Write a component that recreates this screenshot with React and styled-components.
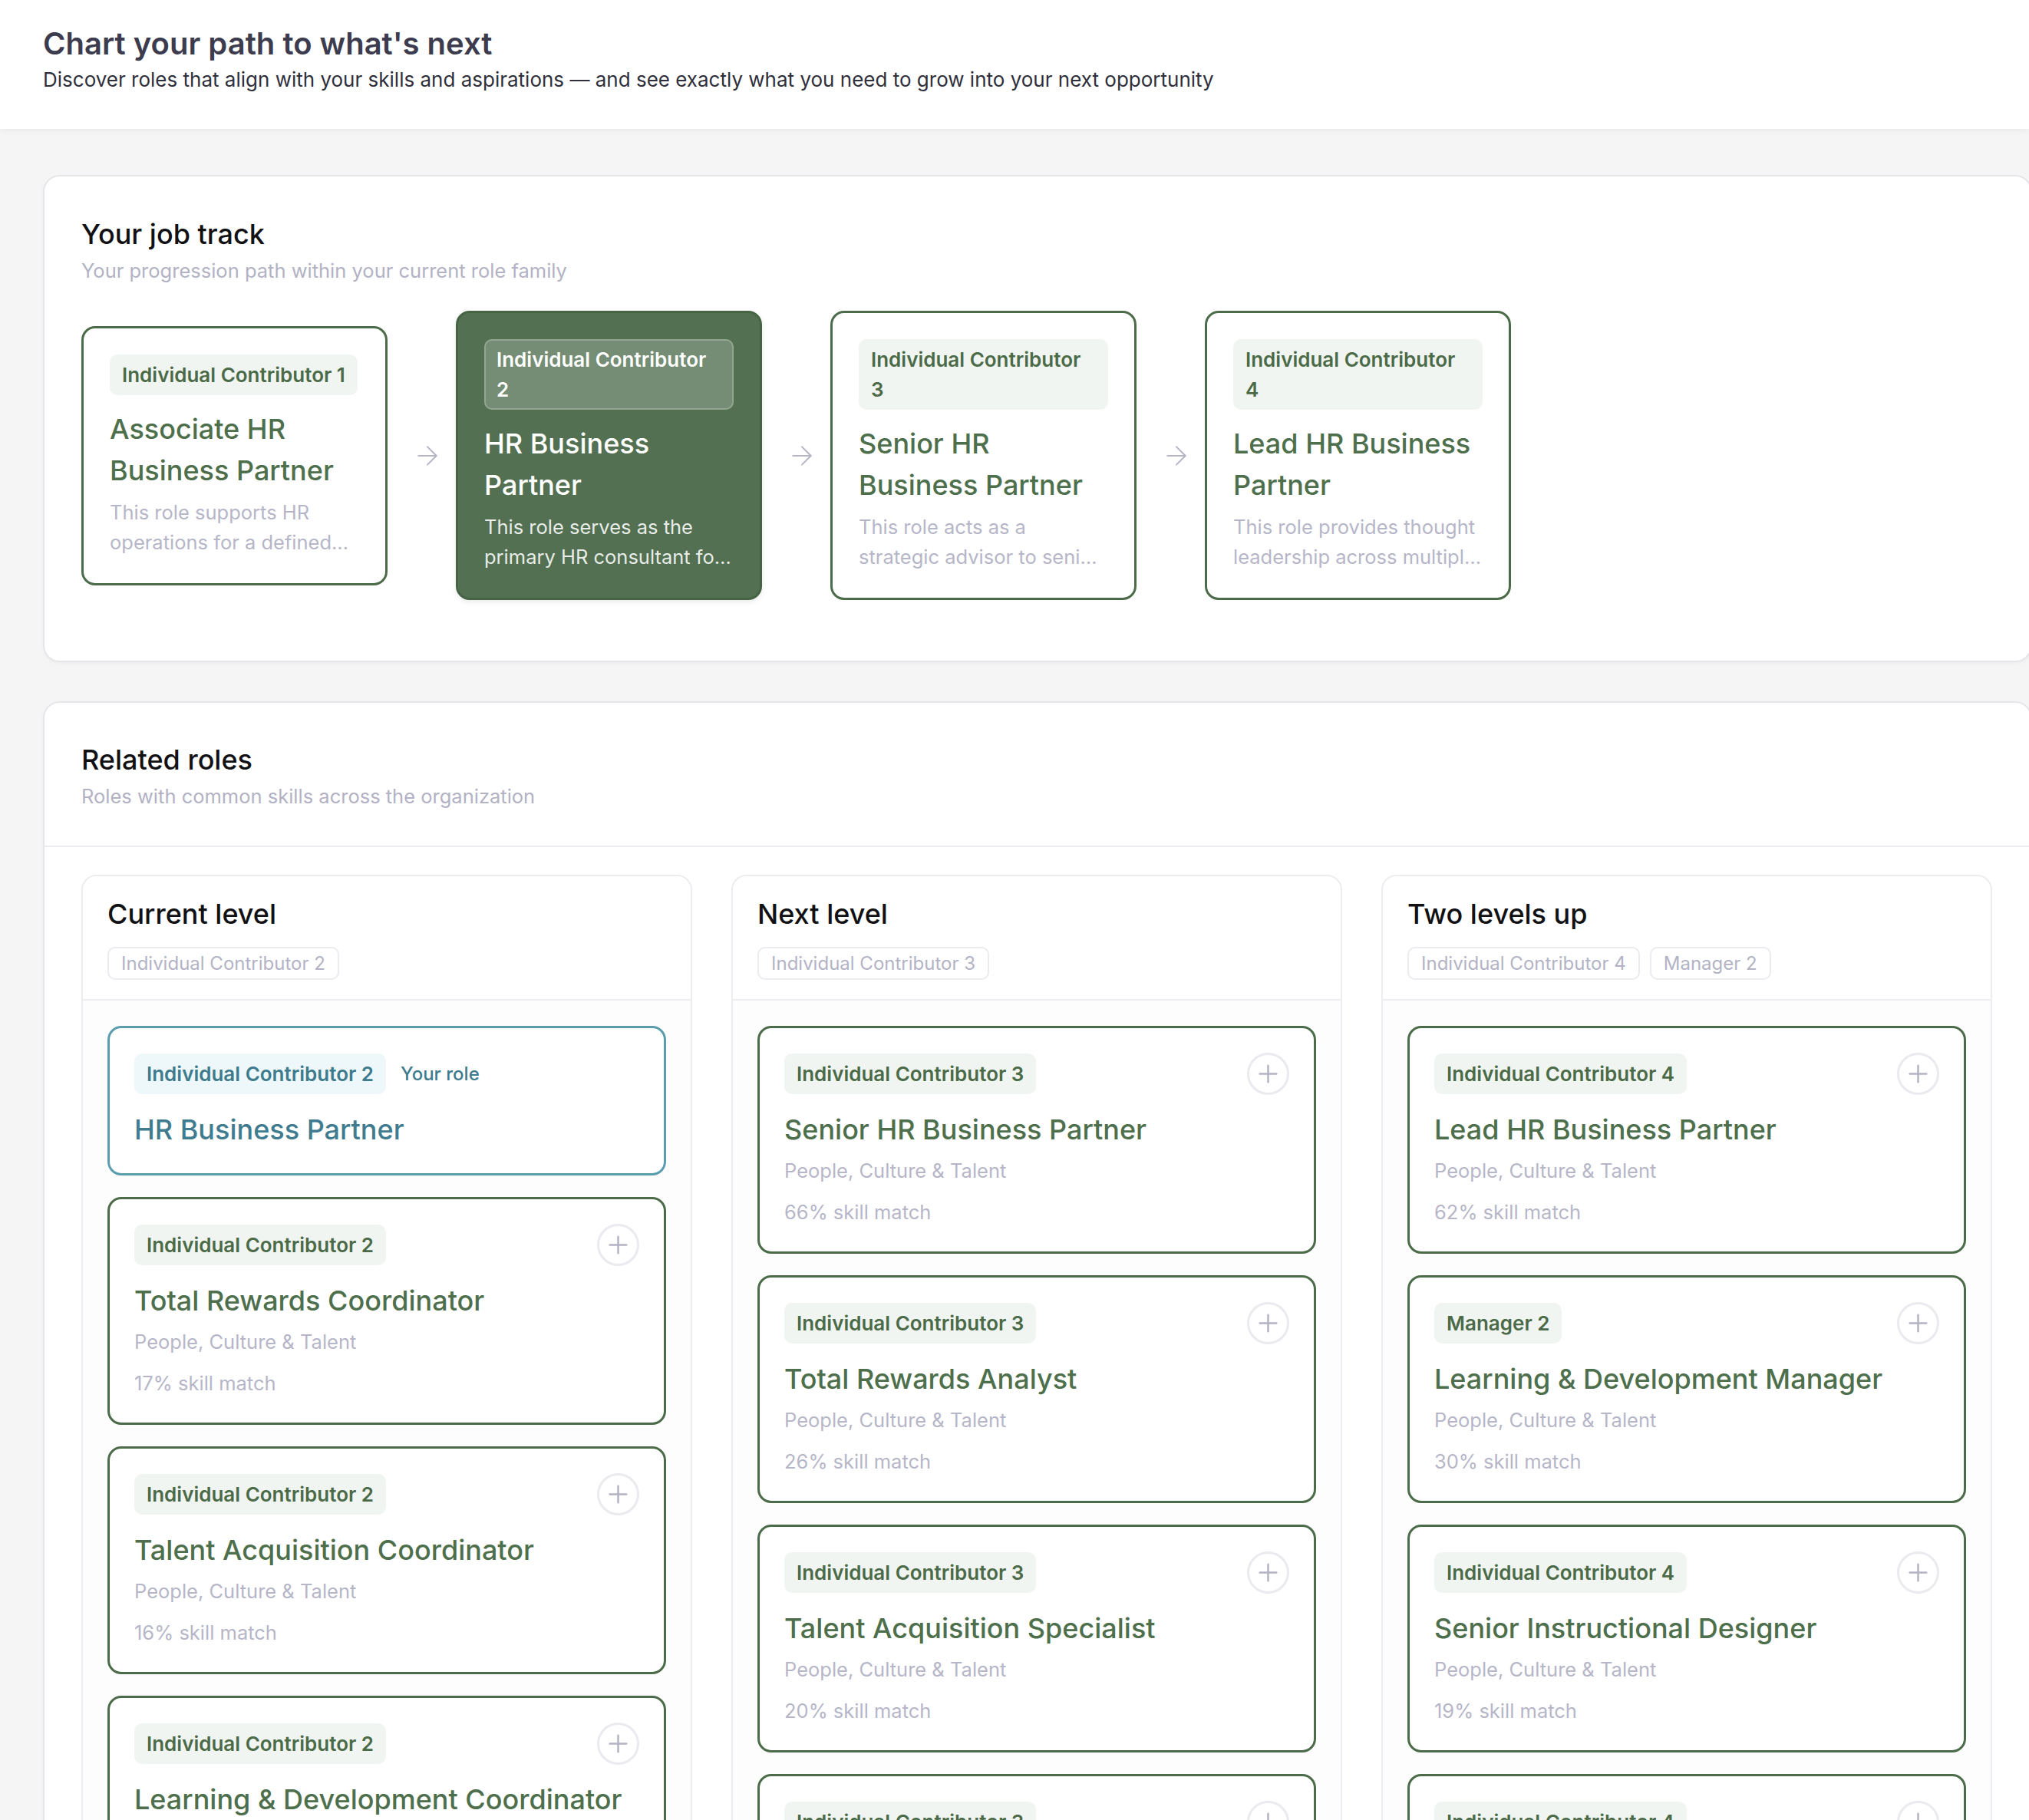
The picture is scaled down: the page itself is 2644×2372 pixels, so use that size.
import React from 'react';
import styled, { createGlobalStyle } from 'styled-components';
import { ArrowRight, Plus } from 'lucide-react';

const GlobalStyle = createGlobalStyle`
  * { box-sizing: border-box; }
  body {
    margin: 0;
    background: #f5f5f5;
    font-family: Inter, "Noto Sans", sans-serif;
    overflow: hidden;
  }
`;

const track = [
  {
    level: 'Individual Contributor 1',
    title: 'Associate HR Business Partner',
    desc: 'This role supports HR operations for a defined business unit, partnering with people managers on day-to-day needs.',
  },
  {
    level: 'Individual Contributor 2',
    title: 'HR Business Partner',
    desc: 'This role serves as the primary HR consultant for a business unit and its leadership team.',
    active: true,
  },
  {
    level: 'Individual Contributor 3',
    title: 'Senior HR Business Partner',
    desc: 'This role acts as a strategic advisor to senior leaders across the organization.',
  },
  {
    level: 'Individual Contributor 4',
    title: 'Lead HR Business Partner',
    desc: 'This role provides thought leadership across multiple business units and HR programs.',
  },
];

const columns = [
  {
    title: 'Current level',
    chips: ['Individual Contributor 2'],
    roles: [
      { level: 'Individual Contributor 2', title: 'HR Business Partner', current: true },
      { level: 'Individual Contributor 2', title: 'Total Rewards Coordinator', match: 17 },
      { level: 'Individual Contributor 2', title: 'Talent Acquisition Coordinator', match: 16 },
      { level: 'Individual Contributor 2', title: 'Learning & Development Coordinator', match: 14 },
    ],
  },
  {
    title: 'Next level',
    chips: ['Individual Contributor 3'],
    roles: [
      { level: 'Individual Contributor 3', title: 'Senior HR Business Partner', match: 66 },
      { level: 'Individual Contributor 3', title: 'Total Rewards Analyst', match: 26 },
      { level: 'Individual Contributor 3', title: 'Talent Acquisition Specialist', match: 20 },
      { level: 'Individual Contributor 3', title: 'Learning & Development Specialist', match: 18 },
    ],
  },
  {
    title: 'Two levels up',
    chips: ['Individual Contributor 4', 'Manager 2'],
    roles: [
      { level: 'Individual Contributor 4', title: 'Lead HR Business Partner', match: 62 },
      { level: 'Manager 2', title: 'Learning & Development Manager', match: 30 },
      { level: 'Individual Contributor 4', title: 'Senior Instructional Designer', match: 19 },
      { level: 'Individual Contributor 4', title: 'Principal Compensation Analyst', match: 15 },
    ],
  },
];

export default function App() {
  return (
    <Page>
      <GlobalStyle />
      <Header>
        <PageTitle>Chart your path to what's next</PageTitle>
        <PageSubtitle>
          Discover roles that align with your skills and aspirations — and see exactly what you need to grow into your next opportunity
        </PageSubtitle>
      </Header>

      <Main>
        <Panel>
          <TrackHead>
            <PanelTitle>Your job track</PanelTitle>
            <PanelSubtitle>Your progression path within your current role family</PanelSubtitle>
          </TrackHead>
          <TrackRow>
            {track.map((step, i) => (
              <React.Fragment key={step.title}>
                {i > 0 && (
                  <ArrowSlot>
                    <ArrowRight size={40} strokeWidth={1.2} />
                  </ArrowSlot>
                )}
                <TrackCard $active={step.active}>
                  <LevelBadge $tone={step.active ? 'active' : 'green'}>{step.level}</LevelBadge>
                  <TrackTitle $active={step.active}>{step.title}</TrackTitle>
                  <TrackDesc $active={step.active}>{step.desc}</TrackDesc>
                </TrackCard>
              </React.Fragment>
            ))}
          </TrackRow>
        </Panel>

        <Panel>
          <RelatedHead>
            <PanelTitle>Related roles</PanelTitle>
            <PanelSubtitle>Roles with common skills across the organization</PanelSubtitle>
          </RelatedHead>
          <ColumnGrid>
            {columns.map(col => (
              <Column key={col.title}>
                <ColumnHead>
                  <ColumnTitle>{col.title}</ColumnTitle>
                  <ChipRow>
                    {col.chips.map(c => <Chip key={c}>{c}</Chip>)}
                  </ChipRow>
                </ColumnHead>
                <ColumnBody>
                  {col.roles.map(role => (
                    <RoleCard key={role.title} $current={role.current}>
                      <CardTop>
                        <BadgeGroup>
                          <LevelBadge $tone={role.current ? 'teal' : 'green'}>{role.level}</LevelBadge>
                          {role.current && <YourRole>Your role</YourRole>}
                        </BadgeGroup>
                        {!role.current && (
                          <AddButton aria-label="Add">
                            <Plus size={37} strokeWidth={1.6} />
                          </AddButton>
                        )}
                      </CardTop>
                      <RoleTitle $current={role.current}>{role.title}</RoleTitle>
                      {!role.current && (
                        <>
                          <RoleMeta>People, Culture &amp; Talent</RoleMeta>
                          <RoleMatch>{role.match}% skill match</RoleMatch>
                        </>
                      )}
                    </RoleCard>
                  ))}
                </ColumnBody>
              </Column>
            ))}
          </ColumnGrid>
        </Panel>
      </Main>
    </Page>
  );
}

const Page = styled.div`
  min-height: 100vh;
  background: #f5f5f5;
`;

const Header = styled.header`
  background: #ffffff;
  padding: 31px 56px 46px;
  box-shadow: 0 2px 8px rgba(0, 0, 0, 0.05);
  position: relative;
`;

const PageTitle = styled.h1`
  margin: 0;
  font-size: 40px;
  line-height: 52px;
  font-weight: 600;
  color: #3c3c4e;
`;

const PageSubtitle = styled.p`
  margin: 3px 0 0;
  font-size: 26px;
  line-height: 36px;
  color: #2f2f3b;
`;

const Main = styled.main`
  display: flex;
  flex-direction: column;
  gap: 51px;
  padding: 60px 0 0 56px;
`;

const Panel = styled.section`
  width: calc(100% + 4px);
  background: #ffffff;
  border: 2px solid #e6e6ea;
  border-radius: 22px;
  box-shadow: 0 2px 4px rgba(0, 0, 0, 0.04);
`;

const TrackHead = styled.div`
  padding: 53px 48px 0;
`;

const PanelTitle = styled.h2`
  margin: 0;
  font-size: 36px;
  line-height: 44px;
  font-weight: 500;
  color: #111114;
`;

const PanelSubtitle = styled.p`
  margin: 8px 0 0;
  font-size: 25.5px;
  line-height: 36px;
  color: #b2b2c4;
`;

const TrackRow = styled.div`
  display: flex;
  align-items: center;
  padding: 34px 48px 79px;
`;

const ArrowSlot = styled.div`
  width: 89px;
  flex: none;
  display: flex;
  justify-content: center;
  padding-left: 14px;
  color: #b5b5c6;
`;

const TrackCard = styled.div`
  width: 399px;
  flex: none;
  padding: 34px;
  border: 3px solid ${p => (p.$active ? '#466444' : '#4b6b49')};
  border-radius: 18px;
  background: ${p => (p.$active ? '#537152' : '#ffffff')};
  box-shadow: ${p => (p.$active ? '0 2px 6px rgba(40, 70, 40, 0.12)' : 'none')};
`;

const badgeTones = {
  green: 'background: #f1f5f1; color: #4a6a48; border-color: #f1f5f1;',
  teal: 'background: #eef7f9; color: #3d7b8d; border-color: #eef7f9;',
  active: 'background: rgba(255,255,255,0.2); color: #ffffff; border-color: rgba(255,255,255,0.22);',
};

const LevelBadge = styled.span`
  display: inline-block;
  max-width: 100%;
  padding: 5px 14px;
  border: 2px solid;
  border-radius: 10px;
  font-size: 26px;
  line-height: 39px;
  font-weight: 600;
  ${p => badgeTones[p.$tone]}
`;

const TrackTitle = styled.h3`
  margin: 17px 0 0;
  font-size: 36px;
  line-height: 54px;
  font-weight: 500;
  color: ${p => (p.$active ? '#ffffff' : '#4e6f4c')};
`;

const TrackDesc = styled.p`
  margin: 8px 0 0;
  font-size: 25.5px;
  line-height: 39px;
  color: ${p => (p.$active ? 'rgba(255,255,255,0.88)' : '#b6b6c8')};
  display: -webkit-box;
  -webkit-line-clamp: 2;
  -webkit-box-orient: vertical;
  overflow: hidden;
`;

const RelatedHead = styled.div`
  padding: 52px 48px 46px;
  border-bottom: 2px solid #ededf1;
`;

const ColumnGrid = styled.div`
  display: grid;
  grid-template-columns: repeat(3, 1fr);
  gap: 51px;
  padding: 36px 50px 40px 48px;
  align-items: start;
`;

const Column = styled.div`
  border: 2px solid #ececf1;
  border-radius: 20px;
  background: #fdfdfd;
  overflow: hidden;
`;

const ColumnHead = styled.div`
  padding: 27px 32px 25px;
  background: #ffffff;
  border-bottom: 2px solid #ececf1;
`;

const ColumnTitle = styled.h3`
  margin: 0;
  font-size: 36px;
  line-height: 44px;
  font-weight: 500;
  color: #111114;
`;

const ChipRow = styled.div`
  display: flex;
  gap: 13px;
  margin-top: 21px;
`;

const Chip = styled.span`
  padding: 2px 16px;
  border: 2px solid #ebebf0;
  border-radius: 10px;
  font-size: 24px;
  line-height: 35px;
  color: #b3b3c5;
`;

const ColumnBody = styled.div`
  display: flex;
  flex-direction: column;
  gap: 28px;
  padding: 33px 32px;
`;

const RoleCard = styled.div`
  padding: 32px 32px 32px;
  border: 3px solid ${p => (p.$current ? '#5a9dae' : '#4b6b49')};
  border-radius: 18px;
  background: #ffffff;
`;

const CardTop = styled.div`
  display: flex;
  align-items: center;
  justify-content: space-between;
  min-height: 55px;
`;

const BadgeGroup = styled.div`
  display: flex;
  align-items: center;
  gap: 19px;
`;

const YourRole = styled.span`
  font-size: 24px;
  font-weight: 500;
  color: #3d7b8d;
`;

const AddButton = styled.button`
  width: 55px;
  height: 55px;
  flex: none;
  display: flex;
  align-items: center;
  justify-content: center;
  padding: 0;
  border: 3px solid #eaeaef;
  border-radius: 50%;
  background: #ffffff;
  color: #b3b3c4;
  cursor: pointer;
`;

const RoleTitle = styled.h4`
  margin: 20px 0 0;
  font-size: 36px;
  line-height: 50px;
  font-weight: 500;
  color: ${p => (p.$current ? '#3f7c8f' : '#4e6f4c')};
`;

const RoleMeta = styled.p`
  margin: 10px 0 0;
  font-size: 25.5px;
  line-height: 38px;
  color: #b6b6c8;
`;

const RoleMatch = styled(RoleMeta)`
  margin-top: 16px;
`;
